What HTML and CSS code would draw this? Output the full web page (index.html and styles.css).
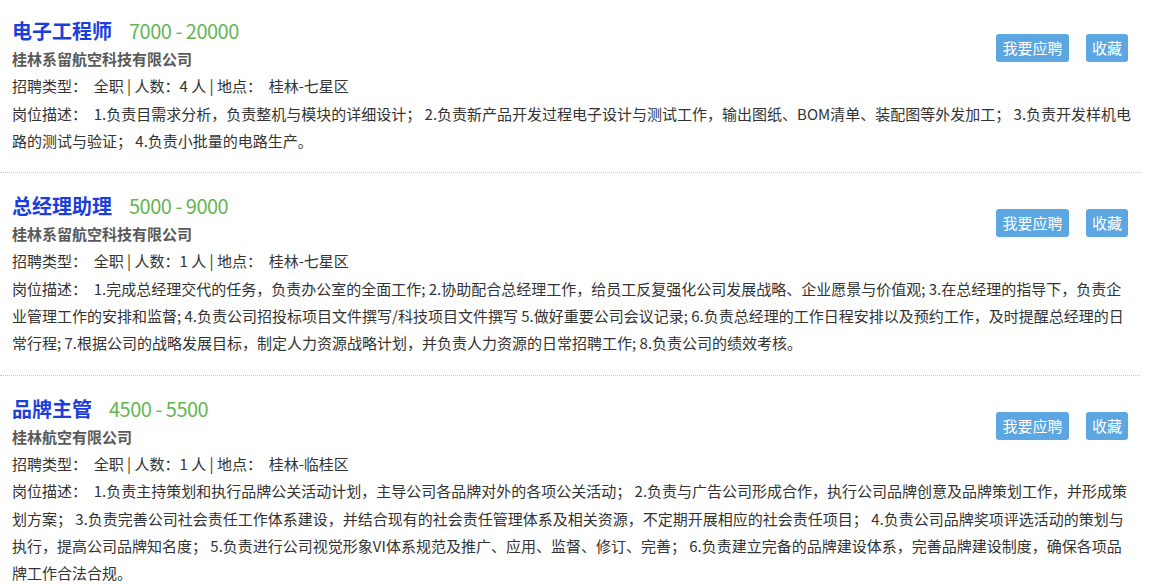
FILE: index.html
```html
<!DOCTYPE html>
<html lang="zh-CN">
<head>
<meta charset="utf-8">
<title>招聘职位</title>
<link rel="stylesheet" href="styles.css">
</head>
<body>
<div class="job-list">
  <div class="job">
    <div class="actions">
      <a class="btn btn-apply">我要应聘</a>
      <a class="btn btn-fav">收藏</a>
    </div>
    <div class="job-head">
      <span class="job-title">电子工程师</span>
      <span class="salary">7000 - 20000</span>
    </div>
    <div class="company">桂林系留航空科技有限公司</div>
    <div class="info">招聘类型：&nbsp; 全职 | 人数：4 人 | 地点：&nbsp; 桂林-七星区</div>
    <div class="desc">岗位描述：&nbsp; 1.负责目需求分析，负责整机与模块的详细设计； 2.负责新产品开发过程电子设计与测试工作，输出图纸、BOM清单、装配图等外发加工； 3.负责开发样机电路的测试与验证； 4.负责小批量的电路生产。</div>
  </div>
  <div class="job">
    <div class="actions">
      <a class="btn btn-apply">我要应聘</a>
      <a class="btn btn-fav">收藏</a>
    </div>
    <div class="job-head">
      <span class="job-title">总经理助理</span>
      <span class="salary">5000 - 9000</span>
    </div>
    <div class="company">桂林系留航空科技有限公司</div>
    <div class="info">招聘类型：&nbsp; 全职 | 人数：1 人 | 地点：&nbsp; 桂林-七星区</div>
    <div class="desc">岗位描述：&nbsp; 1.完成总经理交代的任务，负责办公室的全面工作; 2.协助配合总经理工作，给员工反复强化公司发展战略、企业愿景与价值观; 3.在总经理的指导下，负责企业管理工作的安排和监督; 4.负责公司招投标项目文件撰写/科技项目文件撰写 5.做好重要公司会议记录; 6.负责总经理的工作日程安排以及预约工作，及时提醒总经理的日常行程; 7.根据公司的战略发展目标，制定人力资源战略计划，并负责人力资源的日常招聘工作; 8.负责公司的绩效考核。</div>
  </div>
  <div class="job">
    <div class="actions">
      <a class="btn btn-apply">我要应聘</a>
      <a class="btn btn-fav">收藏</a>
    </div>
    <div class="job-head">
      <span class="job-title">品牌主管</span>
      <span class="salary">4500 - 5500</span>
    </div>
    <div class="company">桂林航空有限公司</div>
    <div class="info">招聘类型：&nbsp; 全职 | 人数：1 人 | 地点：&nbsp; 桂林-临桂区</div>
    <div class="desc">岗位描述：&nbsp; 1.负责主持策划和执行品牌公关活动计划，主导公司各品牌对外的各项公关活动； 2.负责与广告公司形成合作，执行公司品牌创意及品牌策划工作，并形成策划方案； 3.负责完善公司社会责任工作体系建设，并结合现有的社会责任管理体系及相关资源，不定期开展相应的社会责任项目； 4.负责公司品牌奖项评选活动的策划与执行，提高公司品牌知名度； 5.负责进行公司视觉形象VI体系规范及推广、应用、监督、修订、完善； 6.负责建立完备的品牌建设体系，完善品牌建设制度，确保各项品牌工作合法合规。</div>
  </div>
</div>
</body>
</html>
```

FILE: styles.css
```css
html, body {
  margin: 0;
  padding: 0;
  background: #ffffff;
}

body {
  font-family: "Microsoft YaHei", "Noto Sans CJK SC", "Noto Sans", sans-serif;
  font-size: 15px;
  color: #333333;
}

.job-list {
  width: 1140px;
  margin-top: -2px;
}

.job {
  padding: 18px 7px 18px 12px;
  border-bottom: 1px dotted #c8c8c8;
  line-height: 27.3px;
}

.actions {
  float: right;
  display: flex;
  gap: 17px;
  margin-top: 18px;
  margin-right: 5px;
}

.btn {
  display: block;
  height: 28px;
  line-height: 28px;
  background: #5ca6e2;
  color: #ffffff;
  border-radius: 3px;
  font-size: 15px;
  cursor: pointer;
}

.btn-apply {
  padding: 0 6.5px;
}

.btn-fav {
  padding: 0 6px;
}

.job-head {
  height: 29px;
  line-height: 29px;
  display: flex;
  gap: 17px;
  align-items: baseline;
}

.job-title {
  font-size: 20px;
  font-weight: bold;
  color: #1c3fdc;
}

.salary {
  font-size: 20px;
  letter-spacing: -0.5px;
  color: #63b653;
}

.company {
  font-weight: bold;
  color: #595959;
}

.desc {
  word-break: break-all;
}
```
